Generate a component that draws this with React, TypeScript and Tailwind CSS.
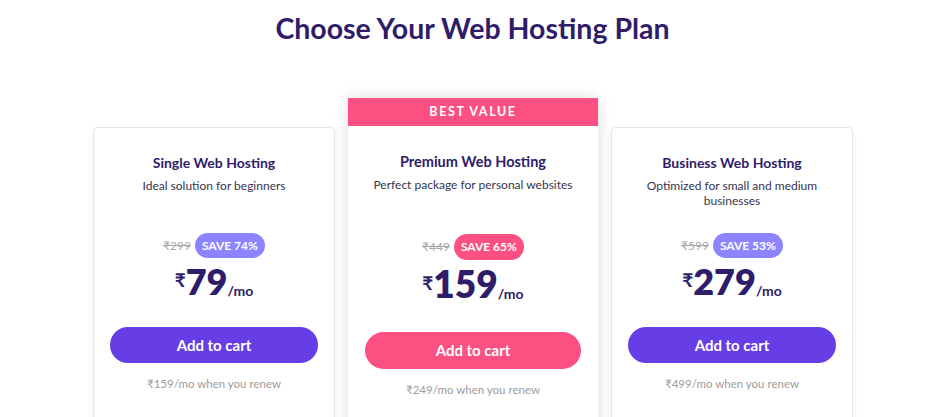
import React from "react";

type Plan = {
  name: string;
  desc: string;
  old: string;
  save: string;
  price: string;
  renew: string;
  featured?: boolean;
};

const plans: Plan[] = [
  { name: "Single Web Hosting", desc: "Ideal solution for beginners", old: "₹299", save: "SAVE 74%", price: "79", renew: "₹159/mo when you renew" },
  { name: "Premium Web Hosting", desc: "Perfect package for personal websites", old: "₹449", save: "SAVE 65%", price: "159", renew: "₹249/mo when you renew", featured: true },
  { name: "Business Web Hosting", desc: "Optimized for small and medium businesses", old: "₹599", save: "SAVE 53%", price: "279", renew: "₹499/mo when you renew" },
];

function Card({ p }: { p: Plan }) {
  const f = !!p.featured;
  return (
    <div
      className={
        f
          ? "flex w-[250px] flex-col shadow-[0_0_14px_rgba(0,0,0,0.14)]"
          : "mt-[29px] flex w-[242px] flex-col rounded-[5px] border border-[#e6e6e6] bg-white shadow-[0_1px_6px_rgba(0,0,0,0.06)]"
      }
    >
      {f && (
        <div className="flex h-[28px] items-center justify-center bg-[#fc4f82] text-[12.5px] font-bold tracking-[1.6px] text-white">
          BEST VALUE
        </div>
      )}
      <div className={f ? "flex flex-col items-center bg-white px-[17px] pb-[40px] pt-[26px]" : "flex flex-col items-center px-[16px] pb-[40px] pt-[25px]"}>
        <div className={(f ? "text-[14.5px]" : "text-[14px]") + " h-[20px] font-bold leading-[20px] text-[#2f1c6a]"}>{p.name}</div>
        <div className={(f ? "w-[216px]" : "w-[184px]") + " mt-[5px] h-[55px] text-center text-[12px] leading-[15px] text-[#36344d]"}>{p.desc}</div>
        <div className={f ? "mt-[2px] flex items-center gap-[4px]" : "flex items-center gap-[4px]"}>
          <span className="text-[12px] text-[#a8a8a8] line-through">{p.old}</span>
          <span
            className={
              (f ? "h-[26px] bg-[#fc4f82] px-[7px]" : "h-[25px] bg-[#8c85ff] px-[7px]") +
              " flex items-center rounded-full text-[12px] font-bold text-white"
            }
          >
            {p.save}
          </span>
        </div>
        <div className={f ? "mt-[1px] flex items-start text-[#2f1c6a]" : "flex items-start text-[#2f1c6a]"}>
          <span className="mt-[12px] text-[19px] font-bold leading-none">₹</span>
          <span className={(f ? "text-[37px]" : "text-[36px]") + " font-extrabold leading-[46px]"}>{p.price}</span>
          <span className="mt-[26px] text-[14px] font-bold leading-none">/mo</span>
        </div>
        <button
          className={
            (f ? "mt-[25px] h-[37px] bg-[#fc4f82]" : "mt-[23px] h-[36px] bg-[#673de6]") +
            " w-full rounded-full text-[15px] font-bold text-white"
          }
        >
          Add to cart
        </button>
        <div className="mt-[12px] text-[11.5px] text-[#9c9c9c]">{p.renew}</div>
      </div>
    </div>
  );
}

export default function App() {
  return (
    <div className="h-[417px] w-[940px] overflow-hidden bg-white font-['Lato',sans-serif]">
      <h1 className="pl-[5px] pt-[10px] text-center text-[28.5px] font-bold leading-[36px] text-[#2f1c6a]">
        Choose Your Web Hosting Plan
      </h1>
      <div className="mt-[52px] flex items-start justify-center gap-[13px] pl-[6px]">
        {plans.map((p) => (
          <Card key={p.name} p={p} />
        ))}
      </div>
    </div>
  );
}
